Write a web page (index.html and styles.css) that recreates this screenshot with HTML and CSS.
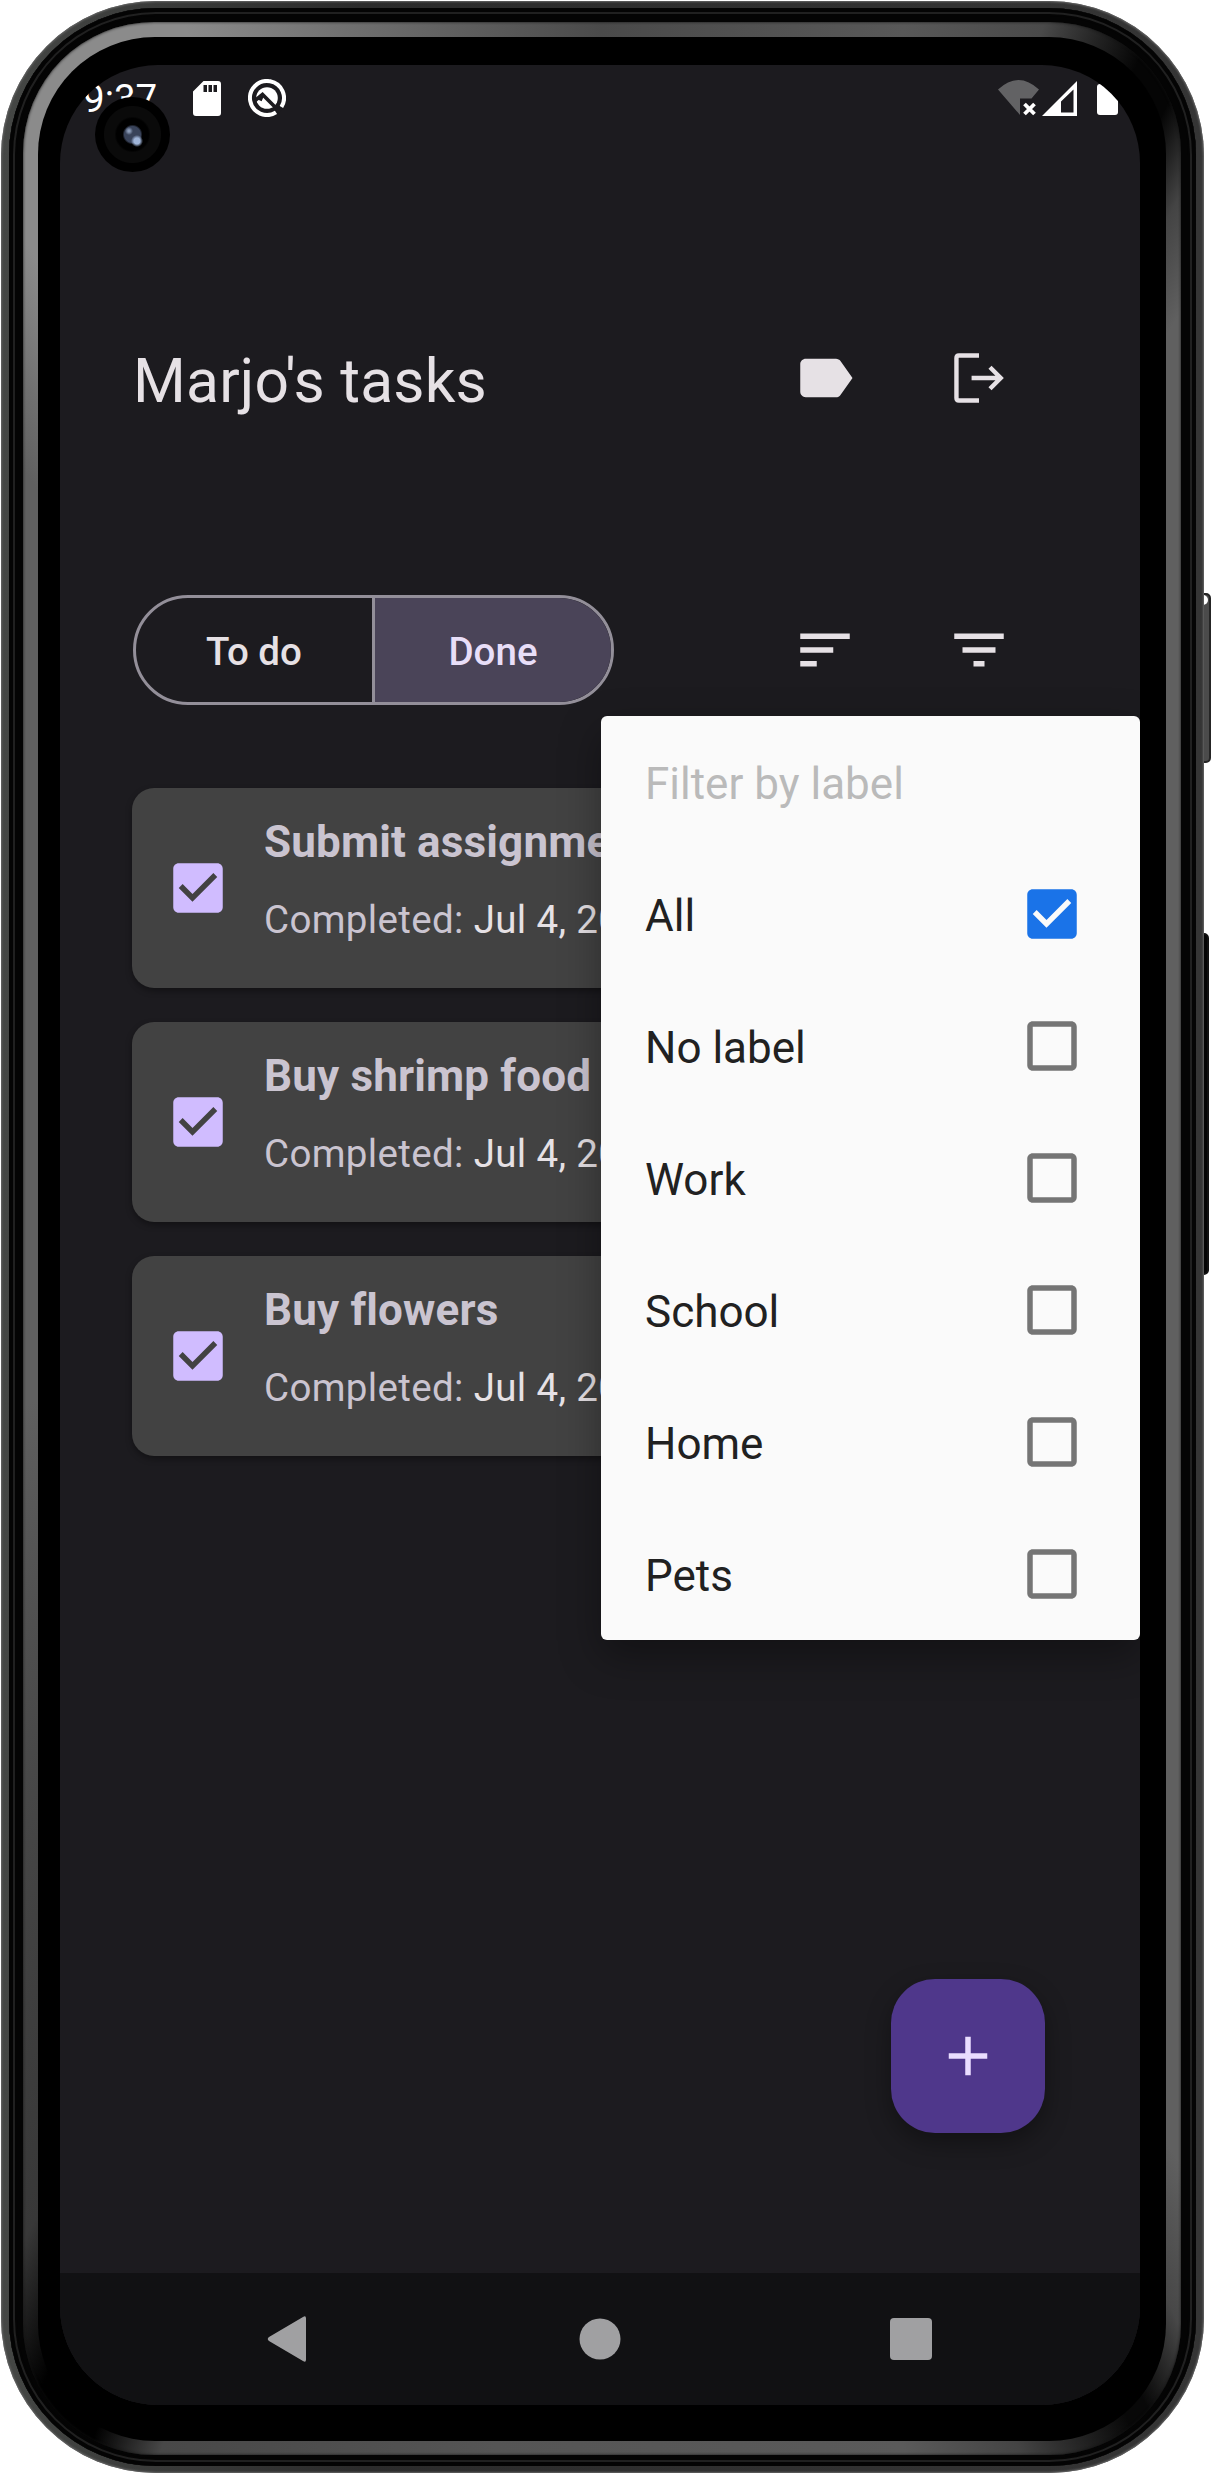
FILE: index.html
```html
<!DOCTYPE html>
<html lang="en">
<head>
<meta charset="utf-8">
<title>Marjo's tasks</title>
<link rel="stylesheet" href="styles.css">
</head>
<body>
<svg class="defs" width="0" height="0">
  <symbol id="checked" viewBox="0 0 24 24"><path d="M19 3H5c-1.110 0-2 .9-2 2v14c0 1.100.89 2 2 2h14c1.110 0 2-.9 2-2V5c0-1.100-.89-2-2-2zm-9 14l-5-5 1.410-1.410L10 14.170l7.590-7.590L19 8l-9 9z"/></symbol>
  <symbol id="unchecked" viewBox="0 0 24 24"><path d="M19 5v14H5V5h14m0-2H5c-1.100 0-2 .9-2 2v14c0 1.100.9 2 2 2h14c1.100 0 2-.9 2-2V5c0-1.100-.9-2-2-2z"/></symbol>
</svg>
<div class="phone">
  <span class="side-key power"></span>
  <span class="side-key volume"></span>
  <div class="shell"><div class="groove"><div class="band"><div class="bezel">
    <div class="screen">
      <div class="status">
        <span class="clock">9:37</span>
        <svg class="sd" viewBox="0 0 28 35"><path fill="#fff" fill-rule="evenodd" d="M10.500 0H25q3 0 3 3V32q0 3-3 3H3q-3 0-3-3V10.500zM10.500 4v7h3.500v-7zM15.500 4v7h3.500v-7zM20.500 4v7h3.500v-7z"/></svg>
        <svg class="q" viewBox="0 0 38 38"><path d="M28 33.400A17 17 0 1 1 33.400 28" fill="none" stroke="#fff" stroke-width="4"/><circle cx="19" cy="19" r="10.800" fill="#fff"/><path d="M7 21.500L14.500 15.500L32 33M14.500 15.500l-2.500 6" fill="none" stroke="#1c1b1f" stroke-width="3.600"/></svg>
        <span class="spacer"></span>
        <svg class="wifi" viewBox="0 0 42 36"><path fill="#626264" d="M0 9.500Q20.500-9.500 41 9.500L33.500 18.500H22V35z"/><path d="M26.500 24l10 10M36.500 24l-10 10" stroke="#fff" stroke-width="3.800"/></svg>
        <svg class="cell" viewBox="0 0 35 35"><path fill="#fff" fill-rule="evenodd" d="M35 0V35H0zM31.500 8.500L19 20.500V31.500H31.500z"/></svg>
        <span class="battery"></span>
      </div>
      <header class="top">
        <h1>Marjo's tasks</h1>
        <svg class="icon" viewBox="0 0 24 24"><path d="M17.630 5.840C17.270 5.330 16.670 5 16 5L5 5.010C3.900 5.010 3 5.900 3 7v10c0 1.100.9 1.990 2 1.990L16 19c.67 0 1.270-.33 1.630-.84L22 12l-4.370-6.160z"/></svg>
        <svg class="icon" viewBox="0 0 24 24"><path class="line" d="M12 3.800H4.700Q3.800 3.800 3.800 4.700V19.300Q3.800 20.200 4.700 20.200H12M9.300 12H20M16 8.100L19.900 12 16 15.900"/></svg>
      </header>
      <div class="tools">
        <div class="segments"><button class="seg">To do</button><button class="seg on">Done</button></div>
        <svg class="icon" viewBox="0 0 24 24"><path d="M3 18h6v-2H3v2zM3 6v2h18V6H3zm0 7h12v-2H3v2z"/></svg>
        <svg class="icon" viewBox="0 0 24 24"><path d="M10 18h4v-2h-4v2zM3 6v2h18V6H3zm3 7h12v-2H6v2z"/></svg>
      </div>
      <main class="tasks">
        <article class="task"><svg class="box"><use href="#checked"/></svg><div><h2>Submit assignment</h2><p>Completed: <b>Jul 4, 2023</b></p></div></article>
        <article class="task"><svg class="box"><use href="#checked"/></svg><div><h2>Buy shrimp food</h2><p>Completed: <b>Jul 4, 2023</b></p></div></article>
        <article class="task"><svg class="box"><use href="#checked"/></svg><div><h2>Buy flowers</h2><p>Completed: <b>Jul 4, 2023</b></p></div></article>
      </main>
      <button class="fab"><svg viewBox="0 0 24 24"><path d="M19 13h-6v6h-2v-6H5v-2h6V5h2v6h6z"/></svg></button>
      <nav class="nav">
        <svg viewBox="0 0 48 48"><path d="M41 3.500V44.500Q41 48 38 46L4 26Q1.500 24 4 22L38 2Q41 0 41 3.500z"/></svg>
        <svg viewBox="0 0 48 48"><circle cx="24" cy="24" r="20.500"/></svg>
        <svg viewBox="0 0 48 48"><rect x="3" y="3" width="42" height="42" rx="4"/></svg>
      </nav>
      <div class="menu">
        <div class="item title">Filter by label</div>
        <div class="item">All<svg class="box on"><use href="#checked"/></svg></div>
        <div class="item">No label<svg class="box"><use href="#unchecked"/></svg></div>
        <div class="item">Work<svg class="box"><use href="#unchecked"/></svg></div>
        <div class="item">School<svg class="box"><use href="#unchecked"/></svg></div>
        <div class="item">Home<svg class="box"><use href="#unchecked"/></svg></div>
        <div class="item">Pets<svg class="box"><use href="#unchecked"/></svg></div>
      </div>
      <span class="camera"></span>
    </div>
  </div></div></div></div>
</div>
</body>
</html>
```
FILE: styles.css
```css
* { box-sizing: border-box; }
body { margin: 0; background: #fff; font-family: Roboto, sans-serif; overflow: hidden; }
h1, h2, p { margin: 0; }
button { border: 0; padding: 0; font: inherit; background: none; }
svg { display: block; flex: none; }
.defs { position: absolute; }

/* device body */
.phone { position: relative; width: 1211px; height: 2474px; padding: 1px 7px 1px 1px; }
.shell {
  position: relative; width: 1203px; height: 2472px; padding: 7px 8px; border-radius: 155px;
  background: linear-gradient(90deg, #454745, #2b2b2b 30%, #353535);
  box-shadow: inset 0 0 2px 1px #666;
}
.groove {
  height: 100%; padding: 14px 15px 11px 14px; border-radius: 147px; background: #040404;
  box-shadow: inset 0 0 0 4px #040404, inset 0 0 0 6px #202020, inset 0 0 0 8px #040404;
}
.band {
  height: 100%; padding: 15px 15px 14px; border-radius: 131px;
  background: conic-gradient(#4a4a4a 0deg, #585858 14deg, #4a4a4a 20deg, #222 22.5deg, #050505 24.5deg, #050505 26.5deg, #444 29deg, #606060 32deg, #606060 148deg, #484848 152deg, #080808 155deg, #080808 156deg, #444 161deg, #5a5a5a 166deg, #555 185deg, #484848 200deg, #000 203deg, #000 206deg, #383838 210deg, #424242 220deg, #606060 254deg, #606060 323deg, #707070 326deg, #8b8b8b 330deg, #8b8b8b 341deg, #707070 348deg, #4a4a4a 360deg);
  box-shadow: inset 0 0 3px #111;
}
.bezel { height: 100%; padding: 28px 25px 38px 22px; border-radius: 117px; background: #000; }
.side-key { position: absolute; left: 1200px; border-radius: 0 5px 5px 0; border: 2px solid #252525; }
.power { top: 593px; width: 11px; height: 170px; background: #4b4b4b; }
.power::before { content: ""; display: block; margin-left: 1px; width: 5px; height: 10px; border-radius: 0 5px 5px 0; background: #fff; }
.volume { top: 933px; width: 9px; height: 342px; background: #050505; border-color: #111; }

/* screen */
.screen {
  position: relative; display: flex; flex-direction: column; width: 1080px; height: 2340px;
  border-radius: 98px; overflow: hidden; background: #1c1b1f; color: #e6e1e5;
}
.status { display: flex; align-items: center; height: 66px; padding: 0 22px 0 23px; color: #fff; }
.clock { width: 110px; font-size: 38.5px; line-height: 66px; padding-top: 2px; }
.sd { width: 28px; height: 35px; margin-right: 27px; }
.q { width: 38px; height: 38px; }
.spacer { flex: 1; }
.wifi { width: 42px; height: 36px; margin-right: 2px; }
.cell { width: 35px; height: 35px; margin-right: 20px; }
.battery { width: 21px; height: 31px; margin-top: 3px; border-radius: 3px; background: #fff; }

.top, .tools { display: flex; align-items: center; gap: 88px; padding: 0 128px 0 72px; }
.top { height: 88px; margin-top: 203px; }
.top h1 { flex: 1; padding: 6px 0 0 1px; font-size: 60.5px; font-weight: 400; line-height: 77px; letter-spacing: .2px; }
.icon { width: 66px; height: 66px; fill: #e6e1e5; }
.line { fill: none; stroke: #e6e1e5; stroke-width: 1.6; }
.tools { height: 110px; margin-top: 173px; }
.segments {
  display: flex; width: 481px; height: 110px; margin: 0 auto 0 1px;
  border: 3px solid #938f99; border-radius: 55px; overflow: hidden;
}
.seg { flex: 1; padding-top: 3px; font-size: 38.5px; font-weight: 500; color: #e6e1e5; }
.seg.on { border-left: 3px solid #938f99; background: #4a4458; color: #e8def8; }

.tasks { display: flex; flex-direction: column; gap: 34px; margin-top: 83px; padding: 0 72px; }
.task {
  display: flex; align-items: center; height: 200px; padding-left: 33px; gap: 33px;
  border-radius: 22px; background: #424242; box-shadow: 0 3px 6px rgba(0, 0, 0, .35);
}
.task h2 { margin-top: -4px; font-size: 44px; line-height: 66px; font-weight: 700; letter-spacing: .15px; color: #cac4d0; }
.task p { margin-top: 17px; padding-bottom: 16px; font-size: 38.5px; line-height: 55px; letter-spacing: .35px; color: #cac4d0; }
.task p b { font-weight: 400; color: #e6e1e5; }
.box { width: 66px; height: 66px; fill: #d0bcff; }

.fab {
  display: grid; place-items: center; width: 154px; height: 154px; margin: auto 95px 140px auto;
  border-radius: 44px; background: #4f378b; box-shadow: 0 10px 24px rgba(0, 0, 0, .35);
}
.fab svg { width: 66px; height: 66px; fill: #eaddff; }
.nav { display: flex; align-items: center; justify-content: center; gap: 263px; height: 132px; background: #111113; }
.nav svg { width: 48px; height: 48px; fill: #a0a0a2; }

/* label filter popup */
.menu {
  position: absolute; left: 541px; top: 651px; width: 539px; border-radius: 6px;
  background: #fafafa; color: #212121; box-shadow: 0 16px 40px rgba(0, 0, 0, .35);
}
.item { display: flex; align-items: center; justify-content: space-between; height: 132px; padding: 4px 55px 0 44px; font-size: 44px; }
.item .box { margin-top: -4px; fill: #757575; }
.item .box.on { fill: #1a73e8; }
.item.title { color: #bababa; }

.camera {
  position: absolute; left: 35px; top: 32px; width: 75px; height: 75px; border-radius: 50%;
  background:
    radial-gradient(circle at 34px 34px, #8c9cb8 0 1px, transparent 4px),
    radial-gradient(circle at 42px 44px, #9fb4d8 0 3px, transparent 6px),
    radial-gradient(circle at center, #39435a 0 8px, #000 10px 16px, #0a0a0a 18px 28px, #000 29px);
}
```
